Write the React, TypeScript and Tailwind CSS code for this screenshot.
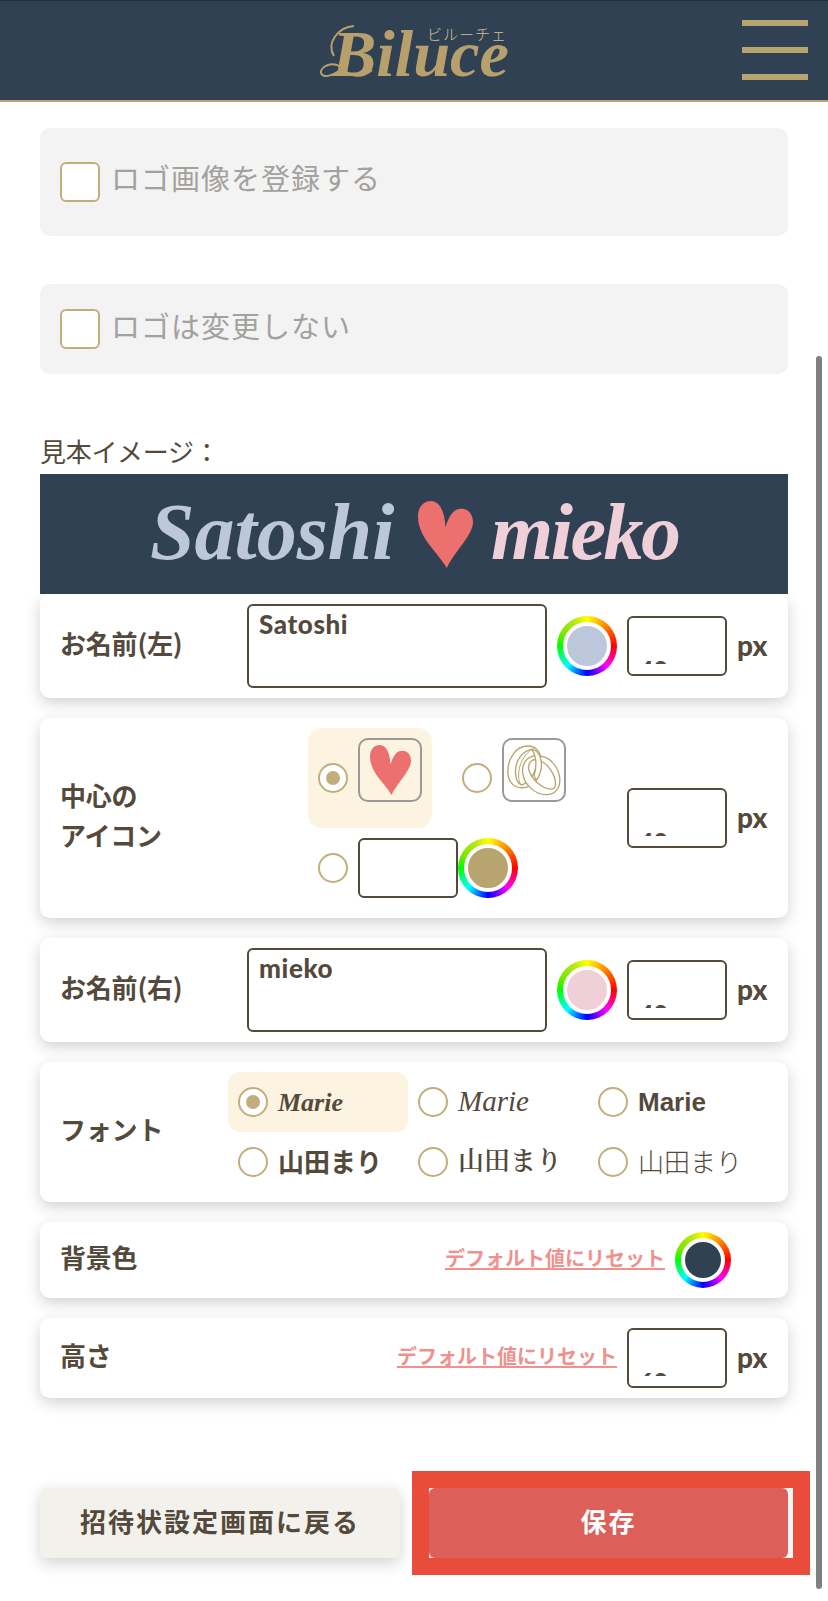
import React from "react";

const JP = "font-['Noto_Sans_CJK_JP',sans-serif]";
const LATIN = "font-['Lato','Noto_Sans_CJK_JP',sans-serif]";
const CARD = "flex w-full rounded-[10px] bg-white shadow-[0_5px_15px_rgba(0,0,0,0.18)]";
const LABEL = "font-['Noto_Sans_CJK_JP',sans-serif] pb-[6px] text-[26px] leading-[40px] font-bold tracking-[-0.2px]";

function Heart({ className }: { className: string }) {
  return (
    <svg viewBox="54 210 164 200" preserveAspectRatio="none" className={className}>
      <path
        fill="#ec706d"
        d="M140 410C113 362 54 320 54 256C54 225 73 210 93 210C120 210 134 245 136 288C146 255 159 233 183 233C206 233 218 251 218 273C218 313 163 360 140 410Z"
      />
    </svg>
  );
}

function Rings() {
  return (
    <svg viewBox="322 133 162 154" className="h-[51px] w-[54px]" fill="none" stroke="#b8a46e" strokeWidth="4">
      <path
        d="M384 136C347 136 324 175 324 214C324 245 343 262 366 262C404 262 425 222 425 184C425 154 408 136 384 136ZM400 146C369 148 347 178 347 214C347 237 354 250 366 254C390 246 411 215 411 180C411 164 407 152 400 146Z"
        fill="#fff"
        fillRule="evenodd"
      />
      <path d="M396 146C381 156 362 180 358 208C355 228 356 244 364 254" strokeWidth="3" />
      <path
        d="M398 167C375 174 366 196 369 218C373 252 405 283 440 283C468 283 482 262 481 236C479 203 454 169 422 167C414 165 405 165 398 167ZM400 178C389 184 385 194 387 206C392 233 427 266 455 266C464 266 468 262 468 250C468 222 444 187 418 180C411 178 405 177 400 178Z"
        fill="#fff"
        fillRule="evenodd"
      />
      <path d="M395 146C408 160 414 190 403 226L410 240C422 222 427 202 425 184C423 163 412 147 395 146Z" fill="#fff" />
    </svg>
  );
}

function Radio({ checked = false }: { checked?: boolean }) {
  return (
    <span className="flex h-[30px] w-[30px] shrink-0 items-center justify-center rounded-full border-2 border-[#c1ae7a] bg-white">
      {checked && <span className="h-[14px] w-[14px] rounded-full bg-[#c1ae7a]" />}
    </span>
  );
}

function Wheel({ color, small = false }: { color: string; small?: boolean }) {
  return (
    <span
      className={`${small ? "h-[56px] w-[56px]" : "h-[60px] w-[60px]"} flex shrink-0 rounded-full bg-[conic-gradient(#ff0,#ff8000_12.5%,#f00_25%,#f0f_37.5%,#00f_50%,#0ff_62.5%,#0f0_75%,#80e600_83%,#b4e614_92%,#ff0)] p-[6px]`}
    >
      <span className={`${color} flex-1 rounded-full border-4 border-white`} />
    </span>
  );
}

function SizeField({ value }: { value: string }) {
  return (
    <div className="flex shrink-0 items-center gap-[10px]">
      <div className="h-[60px] w-[100px] rounded-[6px] border-2 border-[#544a3c] bg-white pr-4 pb-[10px] pl-[10px]">
        <div className="h-full overflow-hidden pt-[35px] text-[25px] leading-[32px] font-black">{value}</div>
      </div>
      <span className="w-[31px] pb-[3px] text-[28px] leading-[32px] font-black">px</span>
    </div>
  );
}

function NameRow({ label, name, color }: { label: string; name: string; color: string }) {
  return (
    <div className={`${CARD} h-[104px] items-center px-5`}>
      <div className={`${LABEL} w-[187px]`}>{label}</div>
      <div className="mr-[10px] h-[84px] w-[300px] rounded-[6px] border-2 border-[#544a3c] px-[10px] pt-[2px] text-[26px] leading-[32px] font-black tracking-[0.6px]">
        {name}
      </div>
      <Wheel color={color} />
      <div className="ml-[10px]">
        <SizeField value="40" />
      </div>
    </div>
  );
}

function FontOption({ checked = false, text, className }: { checked?: boolean; text: string; className: string }) {
  return (
    <div className={`${checked ? "bg-[#fcf3e1]" : ""} flex h-[60px] w-[180px] items-center gap-[10px] rounded-[12px] px-[10px]`}>
      <Radio checked={checked} />
      <span className={`${className} whitespace-nowrap`}>{text}</span>
    </div>
  );
}

function Reset() {
  return (
    <span
      className={`${JP} mb-[3px] h-[23px] border-b-2 border-[#f0918e] text-[20px] leading-[21px] font-bold whitespace-nowrap text-[#f0918e]`}
    >
      デフォルト値にリセット
    </span>
  );
}

export default function App() {
  return (
    <div className={`${LATIN} relative h-[1601px] w-[828px] overflow-hidden bg-white text-[#544a3c]`}>
      <header className="flex h-[102px] items-start border-t border-b-2 border-t-[#202d3e] border-b-[#b9a272] bg-[#314154] pl-[318px]">
        <svg viewBox="318 1 196 98" className="h-[98px] w-[196px]" fill="#b8a06c">
          <text
            x="332"
            y="76"
            fontSize="65"
            fontStyle="italic"
            fontWeight="700"
            fontFamily="Liberation Serif, serif"
            textLength="177"
            lengthAdjust="spacingAndGlyphs"
          >
            Biluce
          </text>
          <path
            d="M334 56C326 43 338 27 354 26M342 68C332 60 320 67 321 73C323 79 336 75 342 68C350 77 362 79 372 70"
            fill="none"
            stroke="#b8a06c"
            strokeWidth="2"
          />
          <text x="427" y="40" fontSize="15" fill="#d3bf8d" fontFamily="Noto Sans CJK JP, sans-serif" fontWeight="300" textLength="79">
            ビルーチェ
          </text>
        </svg>
        <div className="ml-auto flex flex-col gap-[21px] pt-[19px] pr-[20px]">
          <span className="h-[6px] w-[66px] bg-[#b8a46e]" />
          <span className="h-[6px] w-[66px] bg-[#b8a46e]" />
          <span className="h-[6px] w-[66px] bg-[#b8a46e]" />
        </div>
      </header>

      <main className="px-10">
        <div className={`${JP} mt-[26px] flex h-[108px] items-center gap-[11px] rounded-[10px] bg-[#f3f3f3] px-5`}>
          <span className="h-10 w-10 rounded-[6px] border-2 border-[#c1ae7a] bg-white" />
          <span className="pb-[8px] text-[29px] font-normal tracking-[1px] text-[#a3a19d]">ロゴ画像を登録する</span>
        </div>
        <div className={`${JP} mt-12 flex h-[90px] items-center gap-[11px] rounded-[10px] bg-[#f3f3f3] px-5`}>
          <span className="h-10 w-10 rounded-[6px] border-2 border-[#c1ae7a] bg-white" />
          <span className="pb-[6px] text-[29px] font-normal tracking-[1px] text-[#a3a19d]">ロゴは変更しない</span>
        </div>

        <div className={`${JP} mt-[57px] h-[43px] text-[26px] leading-[40px] font-normal tracking-[-0.3px]`}>見本イメージ：</div>
        <div className="relative z-10 flex h-[120px] items-center bg-[#314154] pl-[110px] font-['Liberation_Serif',serif] text-[80px] leading-[100px] font-bold italic">
          <span className="w-[268px] pb-1 text-[#bcc7dc]">Satoshi</span>
          <Heart className="h-[67px] w-[55px]" />
          <span className="ml-[18px] pb-1 tracking-[-2.5px] text-[#efd0d9]">mieko</span>
        </div>

        <div className="flex flex-col gap-5">
          <NameRow label="お名前(左)" name="Satoshi" color="bg-[#bcc7dc]" />

          <div className={`${CARD} h-[200px] items-center px-5`}>
            <div className={`${LABEL} w-[248px]`}>
              中心の
              <br />
              アイコン
            </div>
            <div className="h-[180px] w-[319px]">
              <div className="flex gap-5">
                <div className="flex h-[100px] w-[124px] items-start gap-[10px] rounded-[14px] bg-[#fcf3e1] p-[10px]">
                  <div className="pt-[25px]">
                    <Radio checked />
                  </div>
                  <div className="flex h-16 w-16 items-center justify-center rounded-[10px] border-2 border-[#999]">
                    <Heart className="h-[50px] w-[41px]" />
                  </div>
                </div>
                <div className="flex h-[100px] w-[124px] items-start gap-[10px] p-[10px]">
                  <div className="pt-[25px]">
                    <Radio />
                  </div>
                  <div className="flex h-16 w-16 items-center justify-center rounded-[10px] border-2 border-[#999]">
                    <Rings />
                  </div>
                </div>
              </div>
              <div className="flex items-center p-[10px]">
                <Radio />
                <div className="ml-[10px] h-[60px] w-[100px] rounded-[6px] border-2 border-[#544a3c]" />
                <Wheel color="bg-[#b8a46e]" />
              </div>
            </div>
            <SizeField value="40" />
          </div>

          <NameRow label="お名前(右)" name="mieko" color="bg-[#efd0d9]" />

          <div className={`${CARD} h-[140px] items-center justify-between px-5`}>
            <div className={LABEL}>フォント</div>
            <div className="grid w-[540px] grid-cols-3">
              <FontOption checked text="Marie" className="font-['Liberation_Serif',serif] text-[26px] font-bold italic" />
              <FontOption text="Marie" className="font-['Liberation_Serif',serif] text-[29px] italic" />
              <FontOption text="Marie" className="font-['Liberation_Sans',sans-serif] text-[26px] font-bold" />
              <FontOption text="山田まり" className="font-['Noto_Sans_CJK_JP',sans-serif] pb-1 text-[26px] font-bold" />
              <FontOption text="山田まり" className="font-['Noto_Serif_CJK_JP','Noto_Sans_CJK_JP',serif] pb-[7px] text-[26px] font-semibold" />
              <FontOption text="山田まり" className="font-['Noto_Sans_CJK_JP',sans-serif] pb-1 text-[26px] font-light" />
            </div>
          </div>

          <div className={`${CARD} h-[76px] items-center px-5`}>
            <div className={`${LABEL} mr-auto`}>背景色</div>
            <Reset />
            <div className="mr-[37px] ml-[10px]">
              <Wheel small color="bg-[#314154]" />
            </div>
          </div>

          <div className={`${CARD} h-[80px] items-center px-5`}>
            <div className={`${LABEL} mr-auto`}>高さ</div>
            <Reset />
            <div className="ml-[10px]">
              <SizeField value="60" />
            </div>
          </div>
        </div>

        <div className="mt-[73px] -mr-[22px] flex items-center">
          <button
            className={`${JP} h-[70px] w-[360px] shrink-0 rounded-[6px] bg-[#f3f1ec] pb-[6px] text-[26px] font-bold tracking-[2px] shadow-[0_5px_15px_rgba(0,0,0,0.18)]`}
          >
            招待状設定画面に戻る
          </button>
          <div className="ml-[12px] h-[104px] w-[398px] shrink-0 border-[17px] border-[#ea4c3b] bg-[#f3f3f3]">
            <button className={`${JP} block h-[70px] w-[359px] rounded-[6px] bg-[#dc5f59] pb-[6px] text-[26px] font-bold tracking-[2px] text-white`}>
              保存
            </button>
          </div>
        </div>
      </main>

      <div className="absolute top-[356px] left-[816px] h-[1233px] w-[6px] rounded-full bg-[#808080]" />
    </div>
  );
}
